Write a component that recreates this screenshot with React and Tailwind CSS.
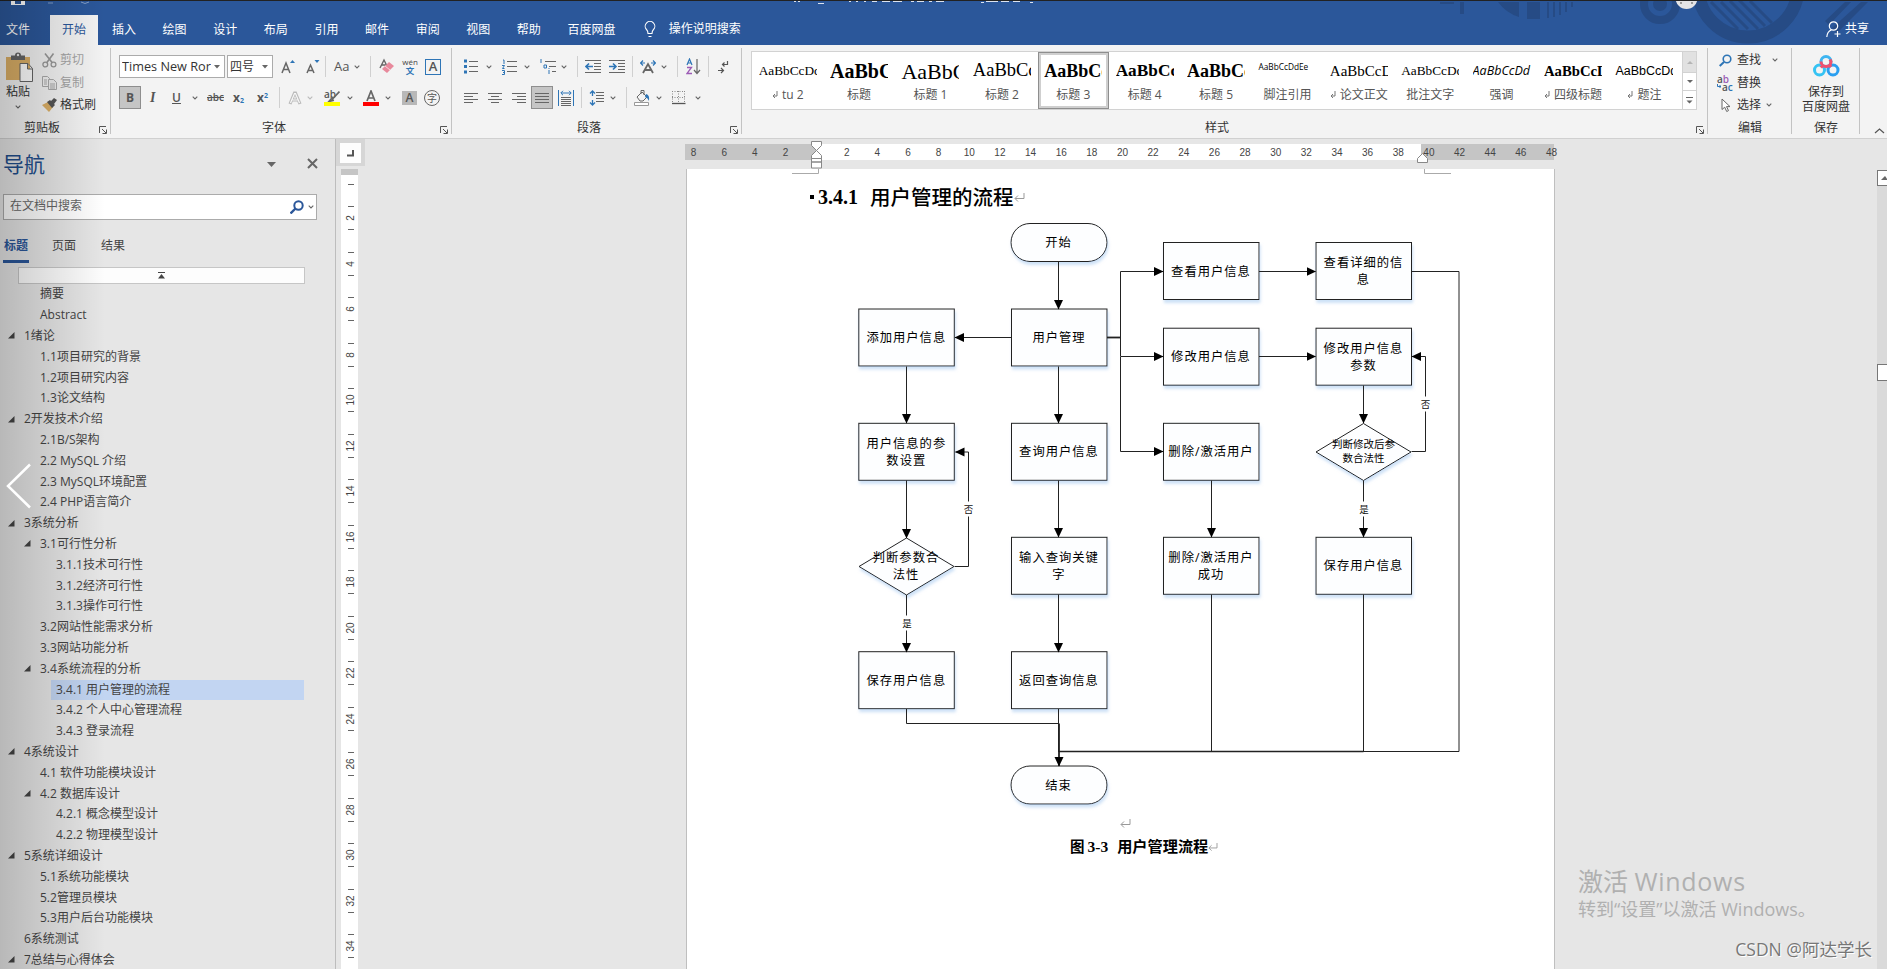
import { clsx } from "clsx";

const tabs = ["插入", "绘图", "设计", "布局", "引用", "邮件", "审阅", "视图", "帮助", "百度网盘"];

const styles = [
  { sample: "AaBbCcDd", name: "tu 2", mark: true, font: "font-['Liberation_Serif'] text-[13.300px]" },
  { sample: "AaBbCc", name: "标题", font: "font-['Liberation_Serif'] text-[20px] font-bold" },
  { sample: "AaBbCc", name: "标题 1", font: "font-['Liberation_Serif'] text-[22px]" },
  { sample: "AaBbCcD", name: "标题 2", font: "font-['Liberation_Serif'] text-[18.500px]" },
  { sample: "AaBbCc", name: "标题 3", font: "font-['Liberation_Serif'] text-[18px] font-bold", active: true },
  { sample: "AaBbCcD", name: "标题 4", font: "font-['Liberation_Serif'] text-[17.300px] font-bold" },
  { sample: "AaBbCc", name: "标题 5", font: "font-['Liberation_Serif'] text-[18px] font-bold" },
  { sample: "AaBbCcDdEe", name: "脚注引用", font: "font-['Open_Sans'] text-[8.300px] -translate-y-1" },
  { sample: "AaBbCcD", name: "论文正文", mark: true, font: "font-['Liberation_Serif'] text-[15px]" },
  { sample: "AaBbCcDd", name: "批注文字", font: "font-['Liberation_Serif'] text-[13.300px]" },
  { sample: "AaBbCcDd", name: "强调", font: "font-['Open_Sans'] text-[12.500px] italic" },
  { sample: "AaBbCcD", name: "四级标题", mark: true, font: "font-['Liberation_Serif'] text-[14.700px] font-bold" },
  { sample: "AaBbCcDd", name: "题注", mark: true, font: "font-['Liberation_Sans'] text-[12.500px]" },
];

const outline = [
  { level: 2, text: "摘要" },
  { level: 2, text: "Abstract" },
  { level: 1, text: "1绪论", open: true },
  { level: 2, text: "1.1项目研究的背景" },
  { level: 2, text: "1.2项目研究内容" },
  { level: 2, text: "1.3论文结构" },
  { level: 1, text: "2开发技术介绍", open: true },
  { level: 2, text: "2.1B/S架构" },
  { level: 2, text: "2.2 MySQL 介绍" },
  { level: 2, text: "2.3 MySQL环境配置" },
  { level: 2, text: "2.4 PHP语言简介" },
  { level: 1, text: "3系统分析", open: true },
  { level: 2, text: "3.1可行性分析", open: true },
  { level: 3, text: "3.1.1技术可行性" },
  { level: 3, text: "3.1.2经济可行性" },
  { level: 3, text: "3.1.3操作可行性" },
  { level: 2, text: "3.2网站性能需求分析" },
  { level: 2, text: "3.3网站功能分析" },
  { level: 2, text: "3.4系统流程的分析", open: true },
  { level: 3, text: "3.4.1 用户管理的流程", active: true },
  { level: 3, text: "3.4.2 个人中心管理流程" },
  { level: 3, text: "3.4.3 登录流程" },
  { level: 1, text: "4系统设计", open: true },
  { level: 2, text: "4.1 软件功能模块设计" },
  { level: 2, text: "4.2 数据库设计", open: true },
  { level: 3, text: "4.2.1 概念模型设计" },
  { level: 3, text: "4.2.2 物理模型设计" },
  { level: 1, text: "5系统详细设计", open: true },
  { level: 2, text: "5.1系统功能模块" },
  { level: 2, text: "5.2管理员模块" },
  { level: 2, text: "5.3用户后台功能模块" },
  { level: 1, text: "6系统测试" },
  { level: 1, text: "7总结与心得体会", open: true },
];

const Svg = ({ w, h, className, children }) => (
  <svg width={w} height={h} viewBox={`0 0 ${w} ${h}`} className={clsx("block shrink-0", className)} fill="none">
    {children}
  </svg>
);

const Chevron = ({ className, color = "#666" }) => (
  <Svg w={6} h={4} className={className}>
    <path d="M.7 .7 3 3 5.3 .7" stroke={color} strokeWidth="1.1" />
  </Svg>
);

const Sep = ({ className }) => <div className={clsx("h-[21px] w-px shrink-0 bg-[#d0d0d0]", className)} />;

const Launcher = () => (
  <Svg w={8} h={8} className="absolute right-[4px] bottom-[4px]">
    <path d="M.5 7V.5H7M3 3l4 4M7.5 3.5v4h-4" stroke="#555" />
  </Svg>
);

const Group = ({ className, label, launcher, children }) => (
  <section className={clsx("relative h-full shrink-0 pt-[6px]", className)}>
    <div className="h-[70px]">{children}</div>
    <div className="text-center text-[12px] leading-[14px] text-[#333]">{label}</div>
    {launcher && <Launcher />}
    <div className="absolute top-[3px] right-0 h-[86px] w-px bg-[#c3c3c3]" />
  </section>
);

const ParaMark = ({ x, y, s = 1, color = "#999" }) => (
  <path d="M10 0v5.5H1.2M4 2.5 1 5.5l3 3" transform={`translate(${x} ${y}) scale(${s})`} stroke={color} fill="none" />
);

/* ---------- title bar + tabs ---------- */

const TitleDecor = () => (
  <Svg w={447} h={44} className="absolute top-0 right-0">
    <g fill="#264b85">
      <path d="M-1 1h15v2H-1zM20 1h4v12h-4zM58 1h21v15Q66 12 58 1zM87 1h13v17H87z" />
      <path d="M107 1h2v16h-2zM113 1h2v15h-2zM119 1h2v13h-2zM125 1h2v10h-2zM131 1h2v5h-2z" />
      <circle cx="220" cy="3" r="7" />
      <path d="m405 1 6 0-22 23-4-4zM421 1h7l-31 31-5-5z" />
    </g>
    <g stroke="#264b85">
      <circle cx="220" cy="3" r="16" strokeWidth="8" />
      <circle cx="308" cy="-14" r="50" strokeWidth="13" />
      <path d="m271 1 27 27M281 1l27 27M290 0l28 28M299-1l26 26M310 0l22 22" strokeWidth="3" />
    </g>
    <circle cx="246.500" cy="-3" r="11" fill="#e4e4e6" />
    <path d="M241 3V1M252 3V1" stroke="#555" />
  </Svg>
);

const TopBar = () => (
  <header className="relative h-[45px] border-t border-[#222] bg-[#2b579a] text-white">
    <TitleDecor />
    <Svg w={1040} h={4} className="absolute top-0 left-0">
      <path d="M11 0h14v4H11z" fill="#fff" />
      <path d="M15 0h6v3h-6z" fill="#2b579a" />
      <path d="M48 2h5M81 1q4 3 8 0" stroke="#7f9bc6" />
      <path d="M794 .5h2M798 .5h2M818 2.500h6M849 .5h2M856 .5h2M864 .5h2M872 .5h5M882 .5h8M893 .5h9M911 .5h3M917 .5h7M929 .5h3M936 .5h8M981 1.500h3M986 .5h12M1001 .5h8M1013 .5h7M1030 1.500h3" stroke="#dbe3f0" />
    </Svg>
    <nav className="relative flex h-full items-end text-[12px] leading-[30px]">
      <div className="w-[50px] pl-[6px]">文件</div>
      <div className="mr-[0.700px] h-[30px] w-[48px] bg-[#f3f3f3] text-center text-[#2b579a]">开始</div>
      {tabs.map((t) => (
        <div key={t} className="px-[13.300px]">{t}</div>
      ))}
      <Svg w={12} h={17} className="mb-[7px] ml-[15px]">
        <path d="M4 12.500Q4 10 2.500 8.500A4.800 4.800 0 1 1 9.500 8.500Q8 10 8 12.500ZM4.500 15.500h3" stroke="#fff" strokeWidth="1.100" />
      </Svg>
      <div className="ml-[13px] -translate-y-px">操作说明搜索</div>
      <div className="mr-[18px] ml-auto flex">
        <Svg w={16} h={17} className="mt-[6px] mr-[3px]">
          <circle cx="7.500" cy="5" r="4.200" stroke="#fff" strokeWidth="1.200" />
          <path d="M.8 16q.4-5.500 4.500-7M11.500 10v6M8.500 13h6" stroke="#fff" strokeWidth="1.200" />
        </Svg>
        <span className="-translate-y-px">共享</span>
      </div>
    </nav>
  </header>
);

/* ---------- ribbon groups ---------- */

const ClipboardGroup = () => (
  <Group className="w-[111px]" label={<span className="mr-[27px]">剪贴板</span>} launcher>
    <div className="flex">
      <div className="ml-[5px] flex w-[26px] flex-col items-center">
        <Svg w={29} h={30} className="mt-px ml-[3px]">
          <path d="M1 5h24v23H1z" fill="#dcb067" />
          <path d="M6 3.500h4a3 3 0 0 1 6 0h4V8H6z" fill="#666" />
          <circle cx="13" cy="3" r="1.200" fill="#eee" />
          <path d="M15 11.500h8l4.500 5V29.500H15zM22.500 11.500V17h5" fill="#fff" stroke="#666" />
        </Svg>
        <div className="mt-[2px] text-[12px] leading-[16px] whitespace-nowrap text-[#333]">粘贴</div>
        <Chevron className="mt-[5px]" />
      </div>
      <div className="-mt-[2px] ml-[11px] flex flex-col text-[12px] leading-[22.500px]">
        <div className="flex items-center text-[#a3a3a3]">
          <Svg w={15} h={15} className="mr-[3px]">
            <path d="M3 .5 10.500 10M11.500 .5 4.500 10" stroke="#999" strokeWidth="1.600" />
            <circle cx="3.300" cy="11.500" r="2.400" stroke="#999" strokeWidth="1.300" />
            <circle cx="11.500" cy="11.500" r="2.400" stroke="#999" strokeWidth="1.300" />
          </Svg>
          剪切
        </div>
        <div className="flex items-center text-[#a3a3a3]">
          <Svg w={15} h={14} className="mr-[3px]">
            <path d="M.5 .5h5l2 2v8h-7zM2 4h3M2 6h3M2 8h3" stroke="#aaa" />
            <path d="M6.500 3.500h5l3 3v7h-8zM8 8h5M8 10h5M8 12h5" fill="#eee" stroke="#aaa" />
          </Svg>
          复制
        </div>
        <div className="flex items-center text-[#333]">
          <Svg w={16} h={14} className="mr-[2px]">
            <path d="m0 7 6-3 5 5-4 5z" fill="#dcb067" />
            <path d="m5 4 3-2 1 1 3-3 3 2-3 4 1 1-3 3z" fill="#555" />
          </Svg>
          格式刷
        </div>
      </div>
    </div>
  </Group>
);

const FontGroup = () => (
  <Group className="w-[341px]" label={<span className="mr-[15px]">字体</span>} launcher>
    <div className="flex h-[31px] items-center pl-[8px]">
      <div className="flex h-[23px] w-[106px] items-center border border-[#ababab] bg-white pr-[4px] pl-[2px]">
        <span className="w-[89px] overflow-hidden text-[12.700px] whitespace-nowrap text-[#333]">Times New Ror</span>
        <Svg w={6} h={4} className="ml-auto"><path d="M0 0h6L3 3.500z" fill="#666" /></Svg>
      </div>
      <div className="ml-[2px] flex h-[23px] w-[46px] items-center border border-[#ababab] bg-white pr-[4px] pl-[2px] text-[12px] text-[#333]">
        四号
        <Svg w={6} h={4} className="ml-auto"><path d="M0 0h6L3 3.500z" fill="#666" /></Svg>
      </div>
      <Svg w={14} h={16} className="ml-[8px]">
        <path d="m1 14 4-10 4 10M2.500 10.500h5" stroke="#666" strokeWidth="1.500" />
        <path d="m9 4 2.500-3L14 4z" fill="#2e75b6" />
      </Svg>
      <Svg w={14} h={16} className="ml-[11px]">
        <path d="m1 14 3.500-8L8 14M2 11.500h5" stroke="#666" strokeWidth="1.500" />
        <path d="m8.500 1 2.500 3 2.500-3z" fill="#2e75b6" />
      </Svg>
      <Sep className="ml-[5px]" />
      <span className="ml-[8px] w-[15px] text-[13px] text-[#555]">Aa</span>
      <Chevron className="ml-[5px]" />
      <Sep className="ml-[10px]" />
      <Svg w={15} h={17} className="ml-[8px]">
        <path d="m1 10 4-8 3 6M2.500 7h4" stroke="#666" strokeWidth="1.400" />
        <path d="m3 11 7-7 5 4-7 7z" fill="#e8899c" />
        <path d="m6 8 5 4" stroke="#f7d4db" />
      </Svg>
      <div className="ml-[8px] flex w-[16px] flex-col items-center">
        <span className="text-[8px] leading-[8px] text-[#444]">wén</span>
        <span className="text-[8.500px] leading-[9px] font-bold text-[#2e75b6]">文</span>
      </div>
      <div className="ml-[7px] flex h-[16px] w-[16px] items-center justify-center border border-[#2e75b6] text-[13px] font-semibold text-[#555]">A</div>
    </div>
    <div className="flex h-[31px] items-center pl-[8px] text-[#555]">
      <div className="flex h-[23px] w-[22px] items-center justify-center border border-[#8e8e8e] bg-[#c5c5c5] text-[12px] font-bold">B</div>
      <span className="ml-[9px] w-[8px] font-['Liberation_Serif'] text-[14px] font-bold italic">I</span>
      <span className="ml-[14px] w-[10px] text-[12px] font-semibold underline">U</span>
      <Chevron className="ml-[10px]" />
      <span className="ml-[9px] w-[18px] text-[10px] font-semibold line-through">abc</span>
      <span className="ml-[8px] w-[14px] text-[12px] font-bold">x<sub className="text-[7px] text-[#2e75b6]">2</sub></span>
      <span className="ml-[10px] w-[14px] text-[12px] font-bold">x<sup className="text-[7px] text-[#2e75b6]">2</sup></span>
      <Sep className="ml-[8px]" />
      <Svg w={14} h={14} className="ml-[8px]">
        <path d="M2 13 6.500 2h1L12 13M4 9h6" stroke="#bbb" strokeWidth="3.200" />
        <path d="M2.500 12 6.500 2.500h1l4 9.500M4.500 9h5" stroke="#f8f8f8" strokeWidth="1.200" />
      </Svg>
      <Chevron className="ml-[5px]" color="#bbb" />
      <div className="relative ml-[11px] h-[16px] w-[16px]">
        <span className="absolute -top-[1px] left-0 text-[10px] leading-[10px] font-semibold">ab</span>
        <Svg w={16} h={16} className="relative">
          <path d="M15.500 1.500 8 9.500M8 8l-3 3.500 4-1z" stroke="#666" strokeWidth="1.800" />
          <path d="M0 12h16v4H0z" fill="#ff0" />
        </Svg>
      </div>
      <Chevron className="ml-[7px]" />
      <Svg w={16} h={16} className="ml-[10px]">
        <path d="M4 11 8 1l4 10M5.500 8h5" stroke="#666" strokeWidth="1.700" />
        <path d="M0 12h16v4H0z" fill="#f00" />
      </Svg>
      <Chevron className="ml-[6px]" />
      <div className="ml-[11px] flex h-[14px] w-[15px] items-center justify-center bg-[#b8b8b8] text-[12px] font-semibold">A</div>
      <div className="ml-[7px] flex h-[16px] w-[16px] items-center justify-center rounded-full border border-[#666] text-[10px] leading-none">字</div>
    </div>
  </Group>
);

const Lines = ({ d }) => <path d={d} stroke="#666" strokeWidth="1" />;

const ParagraphGroup = () => (
  <Group className="w-[290px]" label={<span className="mr-[16px]">段落</span>} launcher>
    <div className="flex h-[31px] items-center pl-[12px]">
      <Svg w={14} h={15}>
        <path d="M0 .5h3v3H0zM0 6h3v3H0zM0 11.500h3v3H0z" fill="#2e75b6" />
        <Lines d="M5 2.500h9M5 7.500h9M5 12.500h9" />
      </Svg>
      <Chevron className="ml-[8px]" />
      <Svg w={15} h={16} className="ml-[10px]">
        <path d="M1 1h1v4M0 6.500h2.500l-2 3h2M0 11.500h2.500v4H0M1 13.500h1" stroke="#2e75b6" />
        <Lines d="M5 2.500h10M5 7.500h10M5 12.500h10" />
      </Svg>
      <Chevron className="ml-[7px]" />
      <Svg w={16} h={16} className="ml-[10px]">
        <path d="M1 0v4M4 6h2.500v3H4zM9 11v4M9 9v1" stroke="#2e75b6" />
        <Lines d="M5 2.500h11M9 7.500h7M12 12.500h4" />
      </Svg>
      <Chevron className="ml-[5px]" />
      <Sep className="ml-[10px]" />
      <Svg w={16} h={14} className="ml-[7px]">
        <Lines d="M0 .5h16M9 3.500h7M9 6.500h7M9 9.500h7M0 12.500h16" />
        <path d="M8 6.500H1M4 3.500 1 6.500l3 3" stroke="#2e75b6" strokeWidth="1.600" />
      </Svg>
      <Svg w={16} h={14} className="ml-[8px]">
        <Lines d="M0 .5h16M9 3.500h7M9 6.500h7M9 9.500h7M0 12.500h16" />
        <path d="M0 6.500h7M4 3.500l3 3-3 3" stroke="#2e75b6" strokeWidth="1.600" />
      </Svg>
      <Sep className="ml-[7px]" />
      <Svg w={16} h={14} className="ml-[7px]">
        <path d="M3 13 8 4l5 9M5 10h6" stroke="#666" strokeWidth="1.800" />
        <path d="M5 3H0M3 .5.5 3 3 5.500M11 3h5M13 .5 15.500 3 13 5.500" stroke="#2e75b6" strokeWidth="1.200" />
      </Svg>
      <Chevron className="ml-[5px]" />
      <Sep className="ml-[10px]" />
      <Svg w={15} h={17} className="ml-[8px]">
        <path d="m1 7 2.500-6L6 7M2 5h3" stroke="#2e75b6" strokeWidth="1.200" />
        <path d="M1 9.500h4.500L1 15.500h5" stroke="#9c5bb5" strokeWidth="1.300" />
        <path d="M11 1v14M8 12l3 3.500L14 12" stroke="#666" strokeWidth="1.200" />
      </Svg>
      <Sep className="ml-[7px]" />
      <Svg w={11} h={14} className="ml-[9px]">
        <path d="M9.500 1v3.500H4.500M6.500 2.500l-2 2 2 2M0 10.500h5M3 8l2.500 2.500L3 13" stroke="#555" strokeWidth="1.200" />
      </Svg>
    </div>
    <div className="flex h-[31px] items-center pl-[12px]">
      <Svg w={14} h={12}><Lines d="M0 1.500h14M0 4.500h9M0 7.500h14M0 10.500h9" /></Svg>
      <Svg w={14} h={12} className="ml-[10px]"><Lines d="M0 1.500h14M3 4.500h8M0 7.500h14M3 10.500h8" /></Svg>
      <Svg w={14} h={12} className="ml-[10px]"><Lines d="M0 1.500h14M5 4.500h9M0 7.500h14M5 10.500h9" /></Svg>
      <div className="ml-[5px] flex h-[23px] w-[22px] items-center justify-center border border-[#8e8e8e] bg-[#c5c5c5]">
        <Svg w={14} h={12}><Lines d="M0 1.500h14M0 4.500h14M0 7.500h14M0 10.500h14" /></Svg>
      </div>
      <Svg w={16} h={16} className="ml-[5px]">
        <path d="M.5 0v16M15.500 0v16M3 3h10M5 .8 2.800 3 5 5.200M11 .8 13.200 3 11 5.200" stroke="#2e75b6" />
        <Lines d="M3 7.500h10M3 9.500h10M3 11.500h10M3 13.500h10M3 15.500h10" />
      </Svg>
      <Sep className="ml-[7px]" />
      <Svg w={15} h={16} className="ml-[7px]">
        <path d="M3.500 1v5M1 3.500 3.500 1 6 3.500M3.500 10v5M1 12.500 3.500 15 6 12.500" stroke="#2e75b6" strokeWidth="1.300" />
        <Lines d="M7 2.500h8M7 5.500h8M7 8.500h8M7 11.500h8" />
      </Svg>
      <Chevron className="ml-[6px]" />
      <Sep className="ml-[10px]" />
      <Svg w={16} h={16} className="ml-[7px]">
        <path d="m3 7 5-5 5 5-4 4H6zM7 4V.5h3V5" stroke="#666" />
        <path d="M12 4q4 1 3 7-1-3-4-4z" fill="#2e75b6" />
        <path d="M.5 12.500h14v3H.5z" fill="#fff" stroke="#999" />
      </Svg>
      <Chevron className="ml-[6px]" />
      <Svg w={14} h={14} className="ml-[10px]">
        <path d="M.5 0v12M6.500 0v12M12.500 0v12M0 .5h13M0 6.500h13" stroke="#888" strokeDasharray="1 1.500" />
        <path d="M0 12.500h13.500" stroke="#555" strokeWidth="1.300" />
      </Svg>
      <Chevron className="ml-[9px]" />
    </div>
  </Group>
);

const StyleCard = ({ sample, name, mark, font, active }) => (
  <div
    className={clsx(
      "flex h-[57px] w-[71.400px] shrink-0 flex-col items-center",
      active && "outline-1 -outline-offset-1 outline-[#8e8e8e] ring-3 ring-[#cfcfcf] ring-inset"
    )}
  >
    <div className={clsx("mt-[6px] flex h-[26px] w-[58px] items-center overflow-hidden whitespace-nowrap text-black", font)}>
      {sample}
    </div>
    <div className="mt-[3px] flex items-center text-[12px] leading-[16px] whitespace-nowrap text-[#555]">
      {mark && (
        <Svg w={6} h={8} className="mr-[4px]">
          <path d="M5 0v5H1M3 3 1 5l2 2" stroke="#777" />
        </Svg>
      )}
      {name}
    </div>
  </div>
);

const StylesGroup = () => (
  <Group className="w-[966px]" label={<span className="mr-[16px]">样式</span>} launcher>
    <div className="ml-[9px] flex h-[59px] w-[946px] border border-[#d2d2d2] bg-white">
      <div className="flex w-[930px]">
        {styles.map((s) => (
          <StyleCard key={s.name} {...s} />
        ))}
      </div>
      <div className="flex w-[14px] flex-col border-l border-[#d2d2d2]">
        <div className="flex h-[20px] items-center justify-center bg-[#e1e1e1]">
          <Svg w={6} h={3}><path d="M0 3h6L3 0z" fill="#b5b5b5" /></Svg>
        </div>
        <div className="flex h-[19px] items-center justify-center border-y border-[#d2d2d2]">
          <Svg w={6} h={3}><path d="M0 0h6L3 3z" fill="#666" /></Svg>
        </div>
        <div className="flex flex-1 items-center justify-center">
          <Svg w={7} h={7}><path d="M0 0h7v1H0zM.5 3.500h6L3.500 6.500z" fill="#666" /></Svg>
        </div>
      </div>
    </div>
  </Group>
);

const EditGroup = () => (
  <Group className="w-[84px] text-[12px] text-[#333]" label="编辑">
    <div className="-translate-y-[2px] leading-[22.500px]">
      <div className="flex items-center pl-[11px]">
        <Svg w={13} h={13} className="mr-[5px]">
          <circle cx="8" cy="5" r="3.800" stroke="#2e75b6" strokeWidth="1.600" />
          <path d="m5 8-4.300 4" stroke="#2e75b6" strokeWidth="2" />
        </Svg>
        查找
        <Chevron className="ml-[11px]" />
      </div>
      <div className="flex items-center pl-[9px]">
        <div className="mr-[4px] w-[16px] text-[10px] leading-[8px] font-semibold">
          <div className="h-[8px] text-[#555]">a<span className="text-[#9c5bb5]">b</span></div>
          <div className="flex h-[8px] items-center text-[#555]">
            <Svg w={4} h={5} className="mr-px"><path d="M.5 0v2.500H4M2.500 1 4 2.500 2.500 4" stroke="#2e75b6" /></Svg>
            a<span className="text-[#2e75b6]">c</span>
          </div>
        </div>
        替换
      </div>
      <div className="flex items-center pl-[13px]">
        <Svg w={11} h={15} className="mr-[5px]">
          <path d="M1 1v10.500l2.700-2.300 2 4.300 1.800-.9-2-4H9z" fill="#fff" stroke="#666" />
        </Svg>
        选择
        <Chevron className="ml-[5px]" />
      </div>
    </div>
  </Group>
);

const SaveGroup = () => (
  <Group className="w-[68px] text-[12px] text-[#333]" label="保存">
    <div className="flex flex-col items-center pt-[4px] leading-[14.500px] whitespace-nowrap">
      <Svg w={27} h={22} className="mb-[8px]">
        <circle cx="13" cy="6.500" r="5" stroke="#3eb5f1" strokeWidth="3" />
        <circle cx="6.500" cy="15" r="5" stroke="#35c3f3" strokeWidth="3" />
        <circle cx="20" cy="15" r="5" stroke="#2a9ff0" strokeWidth="3" />
        <path d="M8 6.500a5 5 0 0 0 10 0l-1-2M9.800 10l-2 2.500M16.500 10l1.500 2" stroke="#f0506e" strokeWidth="3" />
      </Svg>
      <div>保存到</div>
      <div>百度网盘</div>
    </div>
  </Group>
);

const Ribbon = () => (
  <div className="relative flex h-[94px] border-b border-[#d0d0d0] bg-[#f3f3f3]">
    <ClipboardGroup />
    <FontGroup />
    <ParagraphGroup />
    <StylesGroup />
    <EditGroup />
    <SaveGroup />
    <Svg w={11} h={6} className="absolute right-[2px] bottom-[4px]">
      <path d="m1 5 4.500-4L10 5" stroke="#555" strokeWidth="1.200" />
    </Svg>
  </div>
);

/* ---------- navigation pane ---------- */

const NavRow = ({ level, text, open, active }) => (
  <li
    className={clsx(
      "flex h-[20.810px] items-center",
      level === 1 && "pl-[8px]",
      level === 2 && "pl-[24px]",
      level === 3 && "pl-[40px]"
    )}
  >
    <Svg w={7} h={7}>{open && <path d="M6.500 0v6.500H0z" fill="#444" />}</Svg>
    <span className={clsx("ml-[4px] pl-[5px] leading-[20px]", active && "w-[253px] bg-[#c2d5f2]")}>{text}</span>
  </li>
);

const NavPane = () => (
  <aside className="h-full w-[336px] shrink-0 border-r border-[#bdbdbd] text-[12px] text-[#444]">
    <div className="flex h-[55px] items-center pl-[3px] text-[#1f4e8c]">
      <h2 className="mt-[-3px] text-[21px]">导航</h2>
      <Svg w={10} h={5} className="mt-[-5px] ml-[222px]"><path d="M0 0h9L4.500 5z" fill="#666" /></Svg>
      <Svg w={11} h={11} className="mt-[-7px] ml-[30px]">
        <path d="m1 1 9 9M10 1l-9 9" stroke="#666" strokeWidth="2" />
      </Svg>
    </div>
    <div className="ml-[3px] flex h-[26px] w-[314px] items-center border border-[#ababab] bg-white pr-[2px] pl-[6px] text-[#666]">
      <span className="-translate-y-px">在文档中搜索</span>
      <Svg w={14} h={14} className="ml-auto">
        <circle cx="8.500" cy="5.500" r="4.200" stroke="#2b579a" strokeWidth="2" />
        <path d="m5.500 8.500-5 5" stroke="#2b579a" strokeWidth="2.400" />
      </Svg>
      <Chevron className="ml-[4px]" />
    </div>
    <div className="mt-[14px] ml-[3px] flex h-[33px] leading-[24px]">
      <div className="h-[29px] border-b-[3px] border-[#2b579a] px-[1px] font-bold text-[#2b579a]">标题</div>
      <div className="ml-[23px]">页面</div>
      <div className="ml-[25px]">结果</div>
    </div>
    <div className="ml-[18px] flex h-[17px] w-[287px] items-center justify-center border border-[#c6c6c6] bg-[#fdfdfd]">
      <Svg w={7} h={7}><path d="M0 0h7v1H0zM0 6.500h7L3.500 2z" fill="#444" /></Svg>
    </div>
    <ul>
      {outline.map((item) => (
        <NavRow key={item.text} {...item} />
      ))}
    </ul>
  </aside>
);

/* ---------- rulers ---------- */

const vNumbers = Array.from({ length: 17 }, (_, i) => (i + 1) * 2);
const hNumbers = Array.from({ length: 29 }, (_, i) => Math.abs(i * 2 - 8));

const VerticalRuler = () => (
  <div className="h-full w-[29px] shrink-0">
    <div className="h-[27px] bg-[#d6d6d6] pt-[4px] pl-[4px]">
      <div className="flex h-[20px] w-[21px] items-center justify-center bg-[#fdfdfd]">
        <Svg w={7} h={7}><path d="M6 0v5.500H0" stroke="#555" strokeWidth="2" /></Svg>
      </div>
    </div>
    <div className="mt-[3px] ml-[5px] h-[6px] w-[17px] bg-[#c5c5c5]" />
    <div className="ml-[5px] h-[800px] w-[17px] bg-white pt-[9px] font-['Liberation_Sans'] text-[10px] text-[#444]">
      <div className="mx-auto mb-[10.500px] h-px w-[6px] translate-x-px bg-[#666]" />
      {vNumbers.map((n) => (
        <div key={n} className="flex h-[45.500px] translate-x-px flex-col items-center justify-between py-[10.900px]">
          <div className="h-px w-[6px] bg-[#666]" />
          <div className="flex h-[12px] items-center">
            <span className="-rotate-90 leading-none">{n}</span>
          </div>
          <div className="h-px w-[6px] bg-[#666]" />
        </div>
      ))}
    </div>
  </div>
);

const HorizontalRuler = () => (
  <div className="relative ml-[320px] flex h-[16px] w-[869px]">
    <div className="w-[131px] bg-[#c5c5c5]" />
    <div className="w-[605px] bg-white" />
    <div className="flex-1 bg-[#c5c5c5]" />
    <div className="absolute top-[2px] -left-[6.800px] flex font-['Liberation_Sans'] text-[10px] leading-[14px] text-[#444]">
      {hNumbers.map((n, i) => (
        <span key={i} className="w-[30.650px] text-center">{n !== 0 && n}</span>
      ))}
    </div>
    <Svg w={12} h={28} className="absolute -top-[3px] left-[126px]">
      <path d="M.5 .5h10v4l-5 5-5-5zM.5 17.500v-3l5-5 5 5v3zM.5 21h10v6H.5zM.5 17.500h10V21H.5z" fill="#fff" stroke="#888" />
    </Svg>
    <Svg w={11} h={11} className="absolute top-[9px] left-[732px]">
      <path d="m.5 5.500 5-5 5 5v4H.5z" fill="#fff" stroke="#888" />
    </Svg>
  </div>
);

/* ---------- flow chart ---------- */

const boxes = [
  { x: 1011.5, y: 309, lines: ["用户管理"] },
  { x: 858.8, y: 309, lines: ["添加用户信息"] },
  { x: 858.8, y: 423.3, lines: ["用户信息的参", "数设置"] },
  { x: 858.8, y: 651.7, lines: ["保存用户信息"] },
  { x: 1011.5, y: 423.3, lines: ["查询用户信息"] },
  { x: 1011.5, y: 537.3, lines: ["输入查询关键", "字"] },
  { x: 1011.5, y: 651.7, lines: ["返回查询信息"] },
  { x: 1163.5, y: 242.5, lines: ["查看用户信息"] },
  { x: 1163.5, y: 328.2, lines: ["修改用户信息"] },
  { x: 1163.5, y: 423.3, lines: ["删除/激活用户"] },
  { x: 1163.5, y: 537.3, lines: ["删除/激活用户", "成功"] },
  { x: 1316, y: 242.5, lines: ["查看详细的信", "息"] },
  { x: 1316, y: 328.2, lines: ["修改用户信息", "参数"] },
  { x: 1316, y: 537.3, lines: ["保存用户信息"] },
];

const arrows = [
  "M1058.500 261.500V309",
  "M1011 337.500H955",
  "M906.500 366.500V423",
  "M906.500 480.500V538",
  "M1058.500 366.500V423",
  "M1058.500 480.500V537",
  "M1058.500 594.500V652",
  "M1120.500 337.500V271.500H1163",
  "M1120.500 337.500V356.500H1163",
  "M1120.500 357V451.500H1163",
  "M1259 271.500H1315.500",
  "M1259 356.500H1315.500",
  "M1211.500 480.500V537",
  "M1363.500 385.500V423",
  "M906.500 595V652",
  "M1363.500 480.500V537",
  "M954.500 566.500H968.500V452H955.500",
  "M1411.500 451.500H1425.500V356.500H1412",
];

const NodeText = ({ x, y, lines, size = 12.3, gap = 1, lead = 17.3 }) =>
  lines.map((line, i) => (
    <text
      key={line}
      x={x + gap / 2}
      y={y + size * 0.37 + (i - (lines.length - 1) / 2) * lead}
      fontSize={size}
      letterSpacing={gap}
      textAnchor="middle"
      fill="#000"
    >
      {line}
    </text>
  ));

const BranchLabel = ({ x, y, children }) => (
  <g>
    <rect x={x - 5} y={y - 7.5} width="10" height="15" fill="#fff" />
    <text x={x} y={y + 3.5} fontSize="9.500" textAnchor="middle" fill="#111">{children}</text>
  </g>
);

const FlowChart = () => (
  <svg width="867" height="680" viewBox="687 200 867 680" className="absolute top-[31.500px] left-0 block" fill="none">
    <defs>
      <marker id="head" markerUnits="userSpaceOnUse" markerWidth="10" markerHeight="10" refX="9" refY="4.500" orient="auto">
        <path d="M0 0 9.500 4.500 0 9z" fill="#000" />
      </marker>
      <filter id="soft" x="-10%" y="-10%" width="120%" height="130%">
        <feDropShadow dx="1" dy="3" stdDeviation="1.500" floodColor="#9dc3ee" floodOpacity=".5" />
      </filter>
    </defs>
    <g stroke="#222" fill="#fdfeff" filter="url(#soft)">
      <rect x="1011" y="223.500" width="96" height="38" rx="19" />
      <rect x="1011" y="766" width="96" height="38" rx="19" />
      {boxes.map(({ x, y }) => (
        <rect key={`${x}-${y}`} x={x} y={y} width="95.500" height="57" />
      ))}
      <path d="m859 566.500 47.500-28.500 47.500 28.500-47.500 28.500zM1316 452l47.500-28.500L1411 452l-47.500 28.500z" />
    </g>
    <g stroke="#222">
      {arrows.map((d) => (
        <path key={d} d={d} markerEnd="url(#head)" />
      ))}
      <path d="M1107 337.500h14" strokeWidth="1.800" />
      <path d="M906.500 709V723.500H1059M1058.500 709V752M1211.500 594.500V752M1363.500 594.500V752M1411.500 271.500H1459V751.500H1363" />
      <path d="M1363.500 751.500H1059" strokeWidth="1.600" />
      <path d="M1059 723.500V766" strokeWidth="1.800" markerEnd="url(#head)" />
    </g>
    <NodeText x={1058} y={242.5} lines={["开始"]} />
    <NodeText x={1058} y={785} lines={["结束"]} />
    {boxes.map(({ x, y, lines }) => (
      <NodeText key={`${x}-${y}`} x={x + 47} y={y + 28.500} lines={lines} />
    ))}
    <NodeText x={905.5} y={566} lines={["判断参数合", "法性"]} />
    <NodeText x={1363.5} y={451.5} lines={["判断修改后参", "数合法性"]} size={10.5} gap={0} lead={14} />
    <BranchLabel x={968.5} y={509}>否</BranchLabel>
    <BranchLabel x={1425.5} y={404}>否</BranchLabel>
    <BranchLabel x={1364} y={509}>是</BranchLabel>
    <BranchLabel x={907} y={623}>是</BranchLabel>
    <ParaMark x={1120} y={819} />
  </svg>
);

const Page = () => (
  <div className="relative mt-[8.500px] ml-[321px] h-[810px] w-[869px] border-x border-[#bfbfbf] bg-white text-black">
    <Svg w={867} h={8} className="absolute top-0 left-0">
      <path d="M105 4.500h26.500V0M764 4.500h-26.500V0" stroke="#aaa" />
    </Svg>
    <h1 className="flex h-[31px] items-center pt-[25px] pl-[123px] whitespace-nowrap">
      <span className="mr-[4px] h-[4px] w-[4px] bg-black" />
      <span className="font-['Liberation_Serif'] text-[20px] font-bold">3.4.1</span>
      <span className="ml-[12px] text-[20.500px] leading-[20px] font-medium">用户管理的流程</span>
      <Svg w={12} h={12}><ParaMark x={0} y={2} /></Svg>
    </h1>
    <FlowChart />
    <div className="mt-[636px] flex h-[22px] items-center pl-[383px] text-[14.500px] font-bold whitespace-nowrap">
      图
      <span className="ml-[3px] font-['Liberation_Serif'] text-[15.500px]">3-3</span>
      <span className="ml-[9px] text-[15.200px]">用户管理流程</span>
      <Svg w={12} h={12}><ParaMark x={0} y={2} s={0.9} /></Svg>
    </div>
  </div>
);

const ScrollBar = () => (
  <div className="absolute top-[31px] right-0 h-[800px] w-[10px] bg-[#dadada]">
    <div className="flex h-[16px] items-center border border-r-0 border-[#777] bg-white pl-[3px]">
      <Svg w={7} h={4}><path d="M0 4h7L4 0z" fill="#666" /></Svg>
    </div>
    <div className="mt-[178px] h-[17px] border border-r-0 border-[#777] bg-white" />
  </div>
);

export default function App() {
  return (
    <div className="relative flex h-[969px] w-[1887px] flex-col overflow-hidden bg-[#e6e6e6] font-['Open_Sans','Noto_Sans_CJK_SC',sans-serif]">
      <TopBar />
      <Ribbon />
      <main className="flex h-[830px]">
        <NavPane />
        <VerticalRuler />
        <div className="relative flex-1 pt-[5px]">
          <HorizontalRuler />
          <Page />
          <ScrollBar />
        </div>
      </main>

      {/* activation notice and watermark */}
      <div className="absolute top-[865px] left-[1578px] whitespace-nowrap text-[#b0b0b0]">
        <div className="text-[25px] leading-[32px]">激活 <span className="tracking-[.7px]">Windows</span></div>
        <div className="text-[18px] leading-[24px]">转到“设置”以激活 Windows。</div>
      </div>
      <div className="absolute top-[937px] right-[15px] text-[17.500px] leading-[24px] whitespace-nowrap text-[#777] [text-shadow:1px_1px_0_#fff]">
        CSDN @阿达学长
      </div>

      {/* previous-image overlay */}
      <div className="pointer-events-none absolute inset-y-0 left-0 w-[105px] bg-linear-to-r from-black/20 to-transparent" />
      <Svg w={26} h={46} className="absolute top-[463px] left-[6px]">
        <path d="M24 1.500 2 23l22 21.500" stroke="#fff" strokeWidth="2.500" />
      </Svg>
    </div>
  );
}
